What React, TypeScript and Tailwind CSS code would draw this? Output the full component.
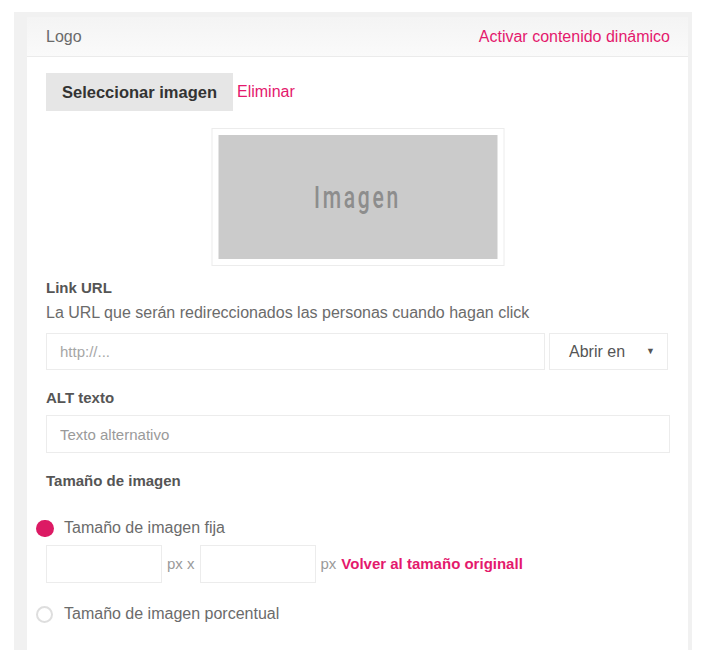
import React, { useState } from "react";

const font = { fontFamily: '"Liberation Sans", Arial, sans-serif' };

function Radio({ checked, onClick }: { checked: boolean; onClick: () => void }) {
  return (
    <button
      onClick={onClick}
      className={`h-[17px] rounded-full shrink-0 ${
        checked ? "w-[18px] bg-[#dc1a64]" : "w-[17px] border-2 border-[#dedede] bg-white"
      }`}
    />
  );
}

export default function App() {
  const [mode, setMode] = useState<"fixed" | "percent">("fixed");
  const [url, setUrl] = useState("");
  const [alt, setAlt] = useState("");
  const [w, setW] = useState("");
  const [h, setH] = useState("");

  return (
    <div className="w-[710px] h-[672px] bg-white pt-[12px] pl-[14px]" style={font}>
      <div className="w-[678px] h-[638px] bg-[#f1f1f1] pt-[5px] pl-[13px] pr-[4px] flex flex-col">
        <div className="flex-1 bg-white flex flex-col">
          {/* cabecera */}
          <div className="h-[40px] flex items-center justify-between pl-[19px] pr-[18px] bg-gradient-to-b from-[#f4f4f4] to-[#fafafa] border-b border-[#ebebeb]">
            <span className="text-[16px] text-[#6a6a6a]">Logo</span>
            <a href="#" className="text-[16px] text-[#e4196d]">
              Activar contenido dinámico
            </a>
          </div>

          <div className="pl-[19px] pr-[18px] flex flex-col">
            <div className="mt-[16px] flex items-center">
              <button className="h-[38px] px-[16px] bg-[#e6e6e6] text-[16.5px] font-bold text-[#333]">
                Seleccionar imagen
              </button>
              <a href="#" className="ml-[4px] text-[16px] text-[#e4196d]">
                Eliminar
              </a>
            </div>

            <div className="mt-[17px] self-center -translate-x-[0.5px] w-[293px] h-[138px] border border-[#ececec] p-[6px]">
              <div className="w-full h-full bg-[#cbcbcb] flex items-center justify-center">
                <span
                  className="inline-block text-[31px] font-medium text-[#8d8d8d] tracking-[4px] scale-x-[0.68] mt-[2px]"
                  style={{ fontFamily: "Roboto, sans-serif" }}
                >
                  Imagen
                </span>
              </div>
            </div>

            <div className="mt-[12px] text-[15px] leading-[20px] font-bold text-[#555]">Link URL</div>
            <div className="mt-[5px] text-[16px] leading-[20px] text-[#6b6b6b]">
              La URL que serán redireccionados las personas cuando hagan click
            </div>
            <div className="mt-[10px] flex gap-[4px]">
              <input
                value={url}
                onChange={(e) => setUrl(e.target.value)}
                placeholder="http://..."
                className="w-[499px] h-[37px] border border-[#ececec] px-[13px] text-[15px] text-[#555] placeholder:text-[#a6a6a6] outline-none"
              />
              <div className="w-[119px] h-[37px] border border-[#ececec] flex items-center pl-[19px] pr-[12px] justify-between">
                <span className="text-[16px] text-[#555]">Abrir en</span>
                <span className="text-[9px] text-[#555]">▼</span>
              </div>
            </div>

            <div className="mt-[18px] text-[15px] leading-[20px] font-bold text-[#555]">ALT texto</div>
            <input
              value={alt}
              onChange={(e) => setAlt(e.target.value)}
              placeholder="Texto alternativo"
              className="mt-[7px] w-[624px] h-[38px] border border-[#ececec] px-[13px] text-[15px] text-[#555] placeholder:text-[#9a9a9a] outline-none"
            />

            <div className="mt-[18px] text-[15px] leading-[20px] font-bold text-[#555]">Tamaño de imagen</div>

            <div className="mt-[25px] h-[24px] flex items-center -ml-[10px] gap-[10px]">
              <Radio checked={mode === "fixed"} onClick={() => setMode("fixed")} />
              <span className="text-[16px] text-[#6b6b6b]">Tamaño de imagen fija</span>
            </div>
            <div className="mt-[5px] flex items-center">
              <input
                value={w}
                onChange={(e) => setW(e.target.value)}
                className="w-[116px] h-[38px] border border-[#ececec] outline-none px-2"
              />
              <span className="mx-[5px] text-[15px] text-[#9a9a9a]">px x</span>
              <input
                value={h}
                onChange={(e) => setH(e.target.value)}
                className="w-[116px] h-[38px] border border-[#ececec] outline-none px-2"
              />
              <span className="ml-[5px] text-[15px] text-[#9a9a9a]">px</span>
              <a href="#" className="ml-[5px] text-[15px] font-bold text-[#e4196d]">
                Volver al tamaño originall
              </a>
            </div>

            <div className="mt-[19px] h-[24px] flex items-center -ml-[10px] gap-[11px]">
              <Radio checked={mode === "percent"} onClick={() => setMode("percent")} />
              <span className="text-[16px] text-[#6b6b6b]">Tamaño de imagen porcentual</span>
            </div>
          </div>
        </div>
      </div>
    </div>
  );
}
